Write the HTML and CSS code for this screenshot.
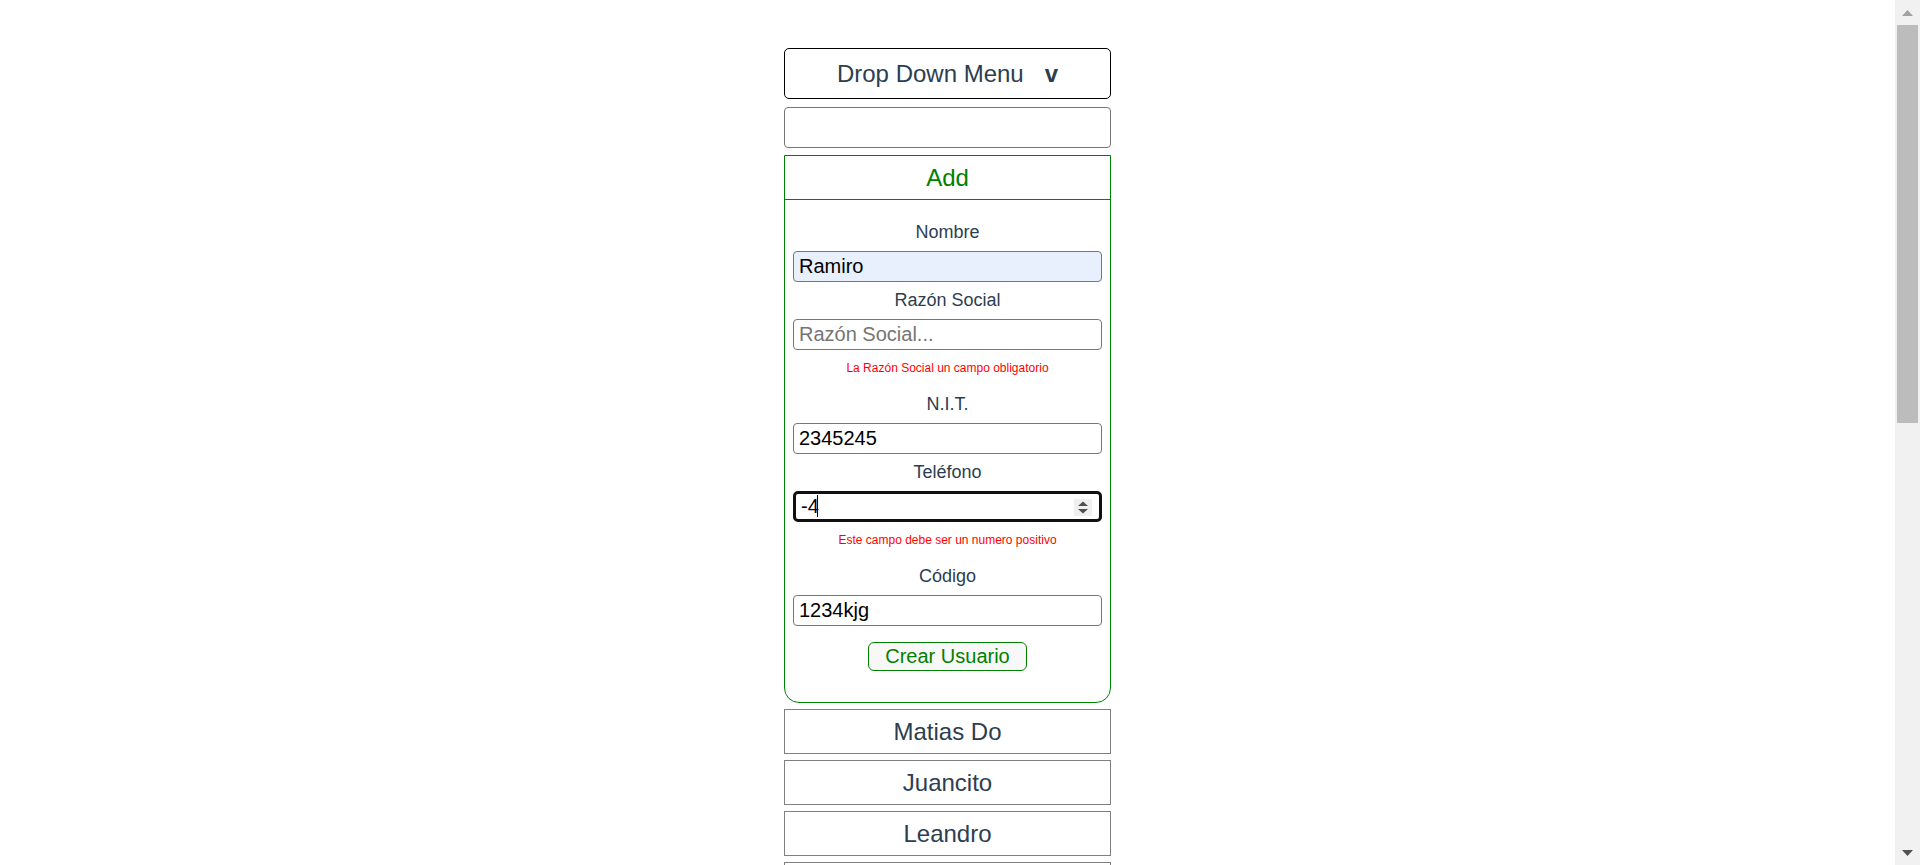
FILE: index.html
```html
<!DOCTYPE html>
<html lang="es">
<head>
<meta charset="utf-8">
<title>Usuarios</title>
<link rel="stylesheet" href="styles.css">
</head>
<body>
<div class="page">
  <div class="app">
    <button class="dropdown" type="button"><span>Drop Down Menu</span><span class="dropdown-v">v</span></button>
    <input class="search" type="text" aria-label="Buscar">
    <section class="add-card">
      <div class="add-head">Add</div>
      <form class="add-form">
        <label class="field-label">Nombre</label>
        <input class="field field-autofill" type="text" value="Ramiro">
        <label class="field-label">Razón Social</label>
        <input class="field" type="text" placeholder="Razón Social...">
        <p class="error">La Razón Social un campo obligatorio</p>
        <label class="field-label">N.I.T.</label>
        <input class="field" type="text" value="2345245">
        <label class="field-label">Teléfono</label>
        <div class="tel-wrap">
          <input class="field field-focus" type="text" value="-4">
          <span class="text-caret"></span>
          <svg class="spinner" width="18" height="17" viewBox="0 0 18 17">
            <rect width="18" height="17" fill="#efefef"/>
            <path d="M4 7 L9 2.5 L14 7 Z" fill="#4f4f4f"/>
            <path d="M4 10 L9 14.5 L14 10 Z" fill="#4f4f4f"/>
          </svg>
        </div>
        <p class="error">Este campo debe ser un numero positivo</p>
        <label class="field-label">Código</label>
        <input class="field" type="text" value="1234kjg">
        <button class="create" type="button">Crear Usuario</button>
      </form>
    </section>
    <ul class="user-list">
      <li class="user-item">Matias Do</li>
      <li class="user-item">Juancito</li>
      <li class="user-item">Leandro</li>
      <li class="user-item">Pedro</li>
    </ul>
  </div>
</div>
<div class="scrollbar" aria-hidden="true">
  <svg class="scroll-arrow scroll-up" width="11" height="6" viewBox="0 0 11 6"><path d="M0 6 L5.5 0 L11 6 Z" fill="#a3a3a3"/></svg>
  <div class="scroll-thumb"></div>
  <svg class="scroll-arrow scroll-down" width="11" height="6" viewBox="0 0 11 6"><path d="M0 0 L5.5 6 L11 0 Z" fill="#505050"/></svg>
</div>
</body>
</html>
```

FILE: styles.css
```css
* {
  box-sizing: border-box;
}

html, body {
  margin: 0;
  padding: 0;
  background: #ffffff;
}

body {
  font-family: "Liberation Sans", Arial, sans-serif;
  color: #2c3e50;
}

.page {
  padding: 48px 25px 0 0;
  min-height: 1780px;
}

.app {
  width: 327px;
  margin: 0 auto;
  display: flex;
  flex-direction: column;
}

.dropdown {
  height: 51px;
  margin: 0 0 8px;
  padding: 0;
  border: 1px solid #000000;
  border-radius: 5px;
  background: #ffffff;
  color: #2c3e50;
  font-family: inherit;
  font-size: 24px;
  display: flex;
  align-items: center;
  justify-content: center;
  gap: 21px;
}

.dropdown-v {
  font-weight: bold;
}

.search {
  height: 41px;
  margin: 0 0 7px;
  border: 1px solid #767676;
  border-radius: 4px;
  background: #ffffff;
  font-family: inherit;
  font-size: 20px;
}

.add-card {
  border: 1px solid #008000;
  border-radius: 0 0 15px 15px;
}

.add-head {
  height: 44px;
  line-height: 43px;
  border-bottom: 1px solid #008000;
  color: #008000;
  font-size: 24px;
  text-align: center;
}

.add-form {
  display: flex;
  flex-direction: column;
  padding: 14px 8px 31px;
  margin: 0;
}

.field-label {
  display: block;
  padding: 8px 0;
  line-height: 21px;
  font-size: 18px;
  text-align: center;
  color: #2c3e50;
}

.field {
  display: block;
  width: 100%;
  height: 31px;
  margin: 0;
  padding: 0 4px 0 5px;
  border: 1px solid #767676;
  border-radius: 4px;
  background: #ffffff;
  color: #000000;
  font-family: inherit;
  font-size: 20px;
}

.field::placeholder {
  color: #757575;
}

.field-autofill {
  background: #e8f0fe;
}

.field-focus {
  border: 3px solid #101010;
  border-radius: 5px;
  padding-left: 5px;
}

.tel-wrap {
  position: relative;
}

.text-caret {
  position: absolute;
  left: 24px;
  top: 4px;
  width: 1px;
  height: 22px;
  background: #000000;
}

.spinner {
  position: absolute;
  right: 10px;
  top: 8px;
}

.error {
  margin: 0;
  height: 36px;
  line-height: 36px;
  font-size: 12px;
  color: #ff0000;
  text-align: center;
}

.create {
  align-self: center;
  width: 159px;
  height: 29px;
  margin-top: 16px;
  padding: 0;
  border: 1px solid #008000;
  border-radius: 6px;
  background: #f8f8f8;
  color: #008000;
  font-family: inherit;
  font-size: 20px;
}

.user-list {
  list-style: none;
  margin: 6px 0 0;
  padding: 0;
  display: flex;
  flex-direction: column;
  gap: 6px;
}

.user-item {
  height: 45px;
  line-height: 43px;
  border: 1px solid #808080;
  font-size: 24px;
  text-align: center;
  color: #2c3e50;
}

.scrollbar {
  position: fixed;
  top: 0;
  right: 0;
  bottom: 0;
  width: 25px;
  background: #f1f1f1;
}

.scroll-arrow {
  position: absolute;
  left: 7px;
}

.scroll-up {
  top: 10px;
}

.scroll-down {
  bottom: 9px;
}

.scroll-thumb {
  position: absolute;
  top: 25px;
  left: 2px;
  width: 21px;
  height: 398px;
  background: #bcbcbc;
}
```
